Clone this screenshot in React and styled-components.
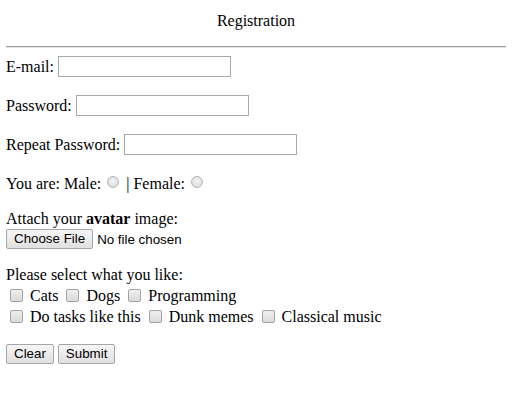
import React from "react";
import styled, { createGlobalStyle } from "styled-components";

const Global = createGlobalStyle`
  html, body { margin: 0; padding: 0; background: #fff; }
  body {
    font-family: "Liberation Serif", "Times New Roman", serif;
    font-size: 16px;
    color: #000;
  }
`;

const Page = styled.form`
  width: 500px;
  padding: 12px 6px 0 6px;
`;

const Title = styled.div`
  text-align: center;
  line-height: 18px;
  height: 18px;
`;

const Rule = styled.hr`
  margin: 16px 0 8px 0;
  border: 0;
  border-top: 1px solid #9a9a9a;
  border-bottom: 1px solid #e4e4e4;
  height: 0;
`;

const Row = styled.div`
  display: flex;
  align-items: center;
  height: 21px;
  line-height: 18px;
  margin-bottom: ${(p) => p.$mb ?? 18}px;
  white-space: pre;
`;

const Label = styled.span`
  margin-right: 4px;
`;

const TextInput = styled.input`
  box-sizing: border-box;
  width: 173px;
  height: 21px;
  margin: 0;
  padding: 1px 2px;
  border: 1px solid #a9a9a9;
  border-radius: 0;
  background: #fff;
  font: 13.33px "Liberation Sans", Arial, sans-serif;
  outline: none;
`;

const Radio = styled.input.attrs({ type: "radio" })`
  appearance: none;
  box-sizing: border-box;
  width: 12px;
  height: 12px;
  margin: 0 3px 4px 6px;
  border: 1px solid #b4b4b4;
  border-radius: 50%;
  background: radial-gradient(circle at 50% 40%, #f4f4f4 0%, #e2e2e2 60%, #d6d6d6 100%);
`;

const Text = styled.span`
  margin-left: ${(p) => p.$ml ?? 0}px;
`;

const Block = styled.div`
  line-height: 18px;
  margin-top: ${(p) => p.$mt ?? 0}px;
  margin-bottom: ${(p) => p.$mb ?? 0}px;
`;

const FileRow = styled.div`
  display: flex;
  align-items: center;
  gap: 4px;
  margin-top: 1px;
  font: 13.33px "Liberation Sans", Arial, sans-serif;
`;

const Button = styled.button`
  box-sizing: border-box;
  height: 20px;
  margin: 0;
  padding: 0 7px;
  border: 1px solid #a6a6a6;
  border-radius: 2px;
  background: linear-gradient(#f6f6f6, #e0e0e0);
  color: #000;
  font: 13.33px "Liberation Sans", Arial, sans-serif;
  line-height: 18px;
`;

const CheckRow = styled.div`
  display: flex;
  align-items: center;
  height: 21px;
  line-height: 18px;
  white-space: pre;
`;

const CheckItem = styled.label`
  display: flex;
  align-items: center;
  margin-right: 4px;
`;

const Check = styled.input.attrs({ type: "checkbox" })`
  appearance: none;
  box-sizing: border-box;
  width: 13px;
  height: 13px;
  margin: 0 7px 0 4px;
  border: 1px solid #a3a3a3;
  border-radius: 2px;
  background: linear-gradient(#efefef, #dadada);
`;

const Buttons = styled.div`
  display: flex;
  gap: 4px;
  margin-top: 17px;
`;

const likes = [
  ["Cats", "Dogs", "Programming"],
  ["Do tasks like this", "Dunk memes", "Classical music"],
];

export default function App() {
  return (
    <>
      <Global />
      <Page onSubmit={(e) => e.preventDefault()}>
        <Title>Registration</Title>
        <Rule />
        <Row>
          <Label>E-mail:</Label>
          <TextInput type="text" />
        </Row>
        <Row>
          <Label>Password:</Label>
          <TextInput type="password" />
        </Row>
        <Row>
          <Label>Repeat Password:</Label>
          <TextInput type="password" />
        </Row>
        <Row $mb={16}>
          <Text>You are: Male:</Text>
          <Radio name="sex" />
          <Text $ml={4}>| Female:</Text>
          <Radio name="sex" />
        </Row>
        <Block>
          Attach your <b>avatar</b> image:
        </Block>
        <FileRow>
          <Button type="button">Choose File</Button>
          <span>No file chosen</span>
        </FileRow>
        <Block $mt={17} $mb={1}>
          Please select what you like:
        </Block>
        {likes.map((row, i) => (
          <CheckRow key={i}>
            {row.map((l) => (
              <CheckItem key={l}>
                <Check />
                {l}
              </CheckItem>
            ))}
          </CheckRow>
        ))}
        <Buttons>
          <Button type="reset">Clear</Button>
          <Button type="submit">Submit</Button>
        </Buttons>
      </Page>
    </>
  );
}
